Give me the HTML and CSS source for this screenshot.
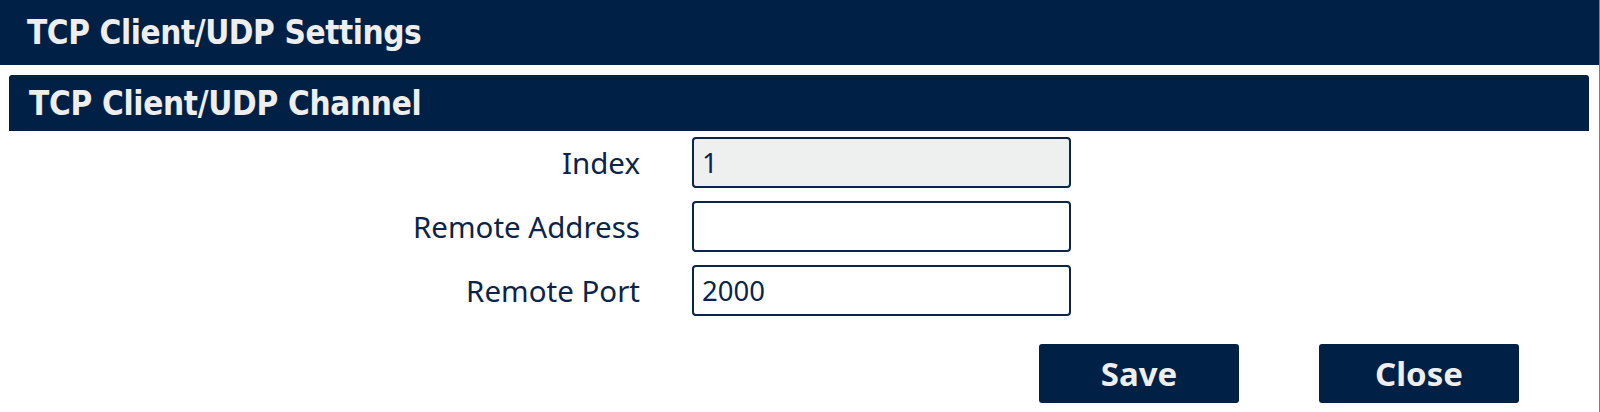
FILE: index.html
```html
<!DOCTYPE html>
<html>
<head>
<meta charset="utf-8">
<link rel="stylesheet" href="styles.css">
</head>
<body>
<div class="page">
  <div class="page-title">TCP Client/UDP Settings</div>
  <div class="panel">
    <div class="panel-title">TCP Client/UDP Channel</div>
    <div class="form">
      <label class="label">Index</label>
      <input class="field field-disabled" type="text" value="1" disabled>
      <label class="label">Remote Address</label>
      <input class="field" type="text" value="">
      <label class="label">Remote Port</label>
      <input class="field" type="text" value="2000">
    </div>
    <div class="actions">
      <button class="btn">Save</button>
      <button class="btn">Close</button>
    </div>
  </div>
</div>
</body>
</html>
```

FILE: styles.css
```css
html, body {
  margin: 0;
  padding: 0;
  background: #ffffff;
}
.page {
  width: 1599px;
  height: 412px;
  border-right: 1px solid #808080;
  box-sizing: content-box;
}
.page-title {
  height: 65px;
  background: #002145;
  color: #eeeeee;
  display: flex;
  align-items: center;
  padding-left: 27px;
  font-family: "DejaVu Sans Condensed", "DejaVu Sans", sans-serif;
  font-stretch: condensed;
  font-weight: bold;
  font-size: 33px;
  letter-spacing: -0.4px;
}
.panel {
  margin: 10px 10px 0 9px;
}
.panel-title {
  height: 56px;
  background: #002145;
  color: #eeeeee;
  border-radius: 3px 3px 0 0;
  display: flex;
  align-items: center;
  padding-left: 20px;
  font-family: "DejaVu Sans Condensed", "DejaVu Sans", sans-serif;
  font-stretch: condensed;
  font-weight: bold;
  font-size: 33px;
  letter-spacing: -0.3px;
}
.form {
  display: grid;
  grid-template-columns: 631px 379px;
  column-gap: 52px;
  row-gap: 13px;
  padding-top: 6px;
  align-items: center;
}
.label {
  text-align: right;
  font-family: "Noto Sans", sans-serif;
  font-size: 29.5px;
  color: #0b2447;
}
.field {
  box-sizing: border-box;
  height: 51px;
  width: 379px;
  border: 2px solid #0b2447;
  border-radius: 4px;
  padding: 0 8px;
  font-family: "Noto Sans", sans-serif;
  font-size: 27.5px;
  color: #0b2447;
  background: #ffffff;
  outline: none;
}
.field-disabled {
  background: #eeefef;
}
.actions {
  display: flex;
  justify-content: flex-end;
  gap: 80px;
  margin-top: 28px;
  padding-right: 70px;
}
.btn {
  width: 200px;
  height: 59px;
  background: #002145;
  color: #eeeeee;
  border: none;
  border-radius: 3px;
  font-family: "Noto Sans", sans-serif;
  font-stretch: condensed;
  font-weight: bold;
  font-size: 33px;
  padding: 0;
}
```
